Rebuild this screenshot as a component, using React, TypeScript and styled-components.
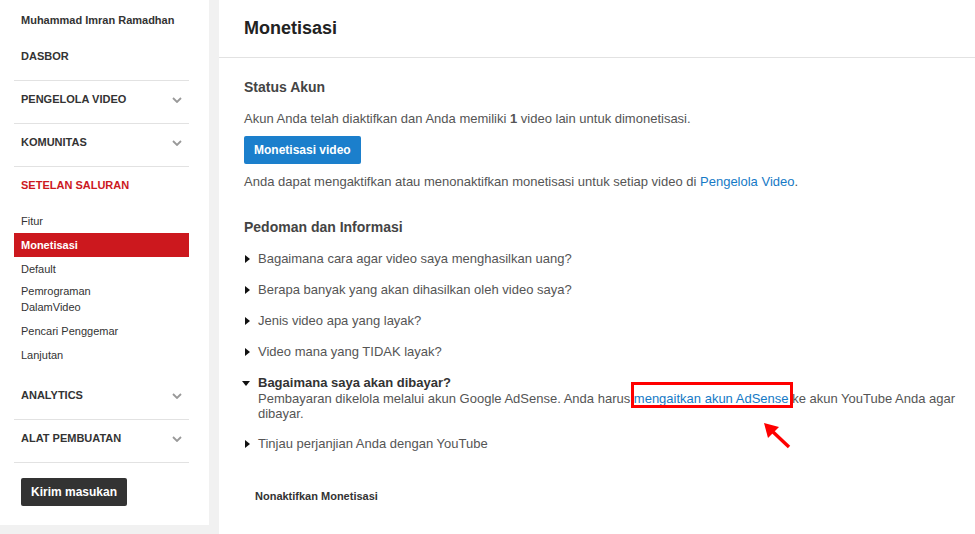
import styled, { createGlobalStyle } from "styled-components";

const GlobalStyle = createGlobalStyle`
  body {
    margin: 0;
    background: #f1f1f1;
    font-family: "Liberation Sans", Arial, sans-serif;
  }
`;

const Page = styled.div`
  display: flex;
  gap: 10px;
  align-items: flex-start;
  width: 975px;
  height: 534px;
  overflow: hidden;
`;

const Sidebar = styled.nav`
  width: 209px;
  flex-shrink: 0;
  background: #fff;
  box-sizing: border-box;
  padding: 0 20px 19px 14px;
`;

const Owner = styled.div`
  padding: 14px 7px 0;
  font-size: 11px;
  line-height: 13px;
  font-weight: bold;
  color: #333;
`;

const Dashboard = styled.div`
  padding: 23px 7px 17px;
  font-size: 11px;
  line-height: 13px;
  font-weight: bold;
  color: #333;
`;

const Section = styled.div<{ $plain?: boolean; $active?: boolean }>`
  display: flex;
  justify-content: space-between;
  align-items: center;
  height: 43px;
  box-sizing: border-box;
  padding: 12px 7px 17px;
  border-top: 1px solid ${(p) => (p.$plain ? "transparent" : "#e2e2e2")};
  font-size: 11px;
  line-height: 13px;
  font-weight: bold;
  text-transform: uppercase;
  color: ${(p) => (p.$active ? "#cc181e" : "#333")};
`;

const Group = styled.div`
  padding-bottom: 9px;
`;

const SubItem = styled.div<{ $selected?: boolean; $multi?: boolean }>`
  padding: ${(p) => (p.$multi ? "2px 7px 4px" : "4px 7px")};
  font-size: 11px;
  line-height: 16px;
  font-weight: ${(p) => (p.$selected ? "bold" : "normal")};
  color: ${(p) => (p.$selected ? "#fff" : "#333")};
  background: ${(p) => (p.$selected ? "#cc181e" : "transparent")};
`;

const ButtonRow = styled.div`
  border-top: 1px solid #e2e2e2;
  padding: 15px 7px 0;
`;

const DarkButton = styled.button`
  height: 28px;
  padding: 0 10px;
  border: 0;
  border-radius: 2px;
  background: #333;
  color: #fff;
  font-family: inherit;
  font-size: 12px;
  font-weight: bold;
`;

const Main = styled.main`
  flex: 1;
  height: 534px;
  background: #fff;
`;

const Header = styled.h1`
  margin: 0;
  padding: 17px 25px 18px;
  font-size: 18px;
  line-height: 22px;
  font-weight: bold;
  color: #222;
  border-bottom: 1px solid #e2e2e2;
`;

const Content = styled.div`
  padding: 20px 6px 0 25px;
  color: #555;
  font-size: 13px;
`;

const SectionTitle = styled.h2<{ $gap?: number }>`
  margin: ${(p) => p.$gap ?? 0}px 0 0;
  font-size: 14px;
  line-height: 18px;
  font-weight: bold;
  color: #444;
`;

const Text = styled.p`
  margin: 0;
  line-height: 16px;
`;

const StatusText = styled(Text)`
  margin-top: 15px;
`;

const Hint = styled(Text)`
  margin-top: 10px;
`;

const Link = styled.a`
  color: #167ac6;
  text-decoration: none;
`;

const BlueButton = styled.button`
  display: block;
  margin-top: 9px;
  height: 28px;
  padding: 0 10px;
  border: 0;
  border-radius: 2px;
  background: #1b7fcc;
  color: #fff;
  font-family: inherit;
  font-size: 12px;
  font-weight: bold;
`;

const Faq = styled.ul`
  list-style: none;
  margin: 15px 0 0;
  padding: 0;
  display: flex;
  flex-direction: column;
  gap: 15px;
`;

const FaqItem = styled.li`
  display: flex;
  gap: 8px;
  line-height: 16px;
`;

const Caret = styled.span<{ $open?: boolean }>`
  flex-shrink: 0;
  width: 6px;
  display: flex;
  justify-content: center;
  padding-top: 4px;

  &::before {
    content: "";
    width: 0;
    height: 0;
    ${(p) =>
      p.$open
        ? `border-left: 4px solid transparent;
           border-right: 4px solid transparent;
           border-top: 5px solid #111;
           margin: 2px 0 0 -3px;`
        : `border-top: 4px solid transparent;
           border-bottom: 4px solid transparent;
           border-left: 5px solid #111;`}
  }
`;

const Question = styled.div<{ $open?: boolean }>`
  font-weight: ${(p) => (p.$open ? "bold" : "normal")};
  color: ${(p) => (p.$open ? "#333" : "#555")};
`;

const Answer = styled.div`
  line-height: 15px;
`;

const Marked = styled.span`
  position: relative;
`;

const RedBox = styled.span`
  position: absolute;
  left: -3px;
  right: -4px;
  top: -9px;
  bottom: -2px;
  border: 3px solid #f00;
  pointer-events: none;
`;

const Pointer = styled.svg`
  position: absolute;
  left: 130px;
  top: 32px;
  overflow: visible;
`;

const Disable = styled.div`
  margin-top: 36px;
  padding-left: 11px;
  font-size: 11px;
  line-height: 16px;
  font-weight: bold;
  color: #333;
`;

const Chevron = () => (
  <svg width="10" height="6" viewBox="0 0 10 6">
    <polyline points="1,1 5,5 9,1" fill="none" stroke="#999" strokeWidth="1.8" />
  </svg>
);

const questions = [
  "Bagaimana cara agar video saya menghasilkan uang?",
  "Berapa banyak yang akan dihasilkan oleh video saya?",
  "Jenis video apa yang layak?",
  "Video mana yang TIDAK layak?",
];

const App = () => {
  return (
    <>
      <GlobalStyle />
      <Page>
        <Sidebar>
          <Owner>Muhammad Imran Ramadhan</Owner>
          <Dashboard>DASBOR</Dashboard>
          <Section>
            Pengelola Video <Chevron />
          </Section>
          <Section>
            Komunitas <Chevron />
          </Section>
          <Group>
            <Section $active>Setelan Saluran</Section>
            <SubItem>Fitur</SubItem>
            <SubItem $selected>Monetisasi</SubItem>
            <SubItem>Default</SubItem>
            <SubItem $multi>
              Pemrograman
              <br />
              DalamVideo
            </SubItem>
            <SubItem>Pencari Penggemar</SubItem>
            <SubItem>Lanjutan</SubItem>
          </Group>
          <Section $plain>
            Analytics <Chevron />
          </Section>
          <Section>
            Alat Pembuatan <Chevron />
          </Section>
          <ButtonRow>
            <DarkButton>Kirim masukan</DarkButton>
          </ButtonRow>
        </Sidebar>

        <Main>
          <Header>Monetisasi</Header>
          <Content>
            <SectionTitle>Status Akun</SectionTitle>
            <StatusText>
              Akun Anda telah diaktifkan dan Anda memiliki <b>1</b> video lain
              untuk dimonetisasi.
            </StatusText>
            <BlueButton>Monetisasi video</BlueButton>
            <Hint>
              Anda dapat mengaktifkan atau menonaktifkan monetisasi untuk setiap
              video di <Link href="#">Pengelola Video</Link>.
            </Hint>

            <SectionTitle $gap={28}>Pedoman dan Informasi</SectionTitle>
            <Faq>
              {questions.map((q) => (
                <FaqItem key={q}>
                  <Caret />
                  <Question>{q}</Question>
                </FaqItem>
              ))}
              <FaqItem>
                <Caret $open />
                <div>
                  <Question $open>Bagaimana saya akan dibayar?</Question>
                  <Answer>
                    Pembayaran dikelola melalui akun Google AdSense. Anda harus{" "}
                    <Marked>
                      <Link href="#">mengaitkan akun AdSense</Link>
                      <RedBox />
                      <Pointer width="28" height="28" viewBox="0 0 28 28">
                        <line x1="25" y1="24" x2="8" y2="8" stroke="#f00" strokeWidth="3.5" />
                        <polygon points="0,0 15,4 4,15" fill="#f00" />
                      </Pointer>
                    </Marked>{" "}
                    ke akun YouTube Anda agar dibayar.
                  </Answer>
                </div>
              </FaqItem>
              <FaqItem>
                <Caret />
                <Question>Tinjau perjanjian Anda dengan YouTube</Question>
              </FaqItem>
            </Faq>

            <Disable>Nonaktifkan Monetisasi</Disable>
          </Content>
        </Main>
      </Page>
    </>
  );
};

export default App;
